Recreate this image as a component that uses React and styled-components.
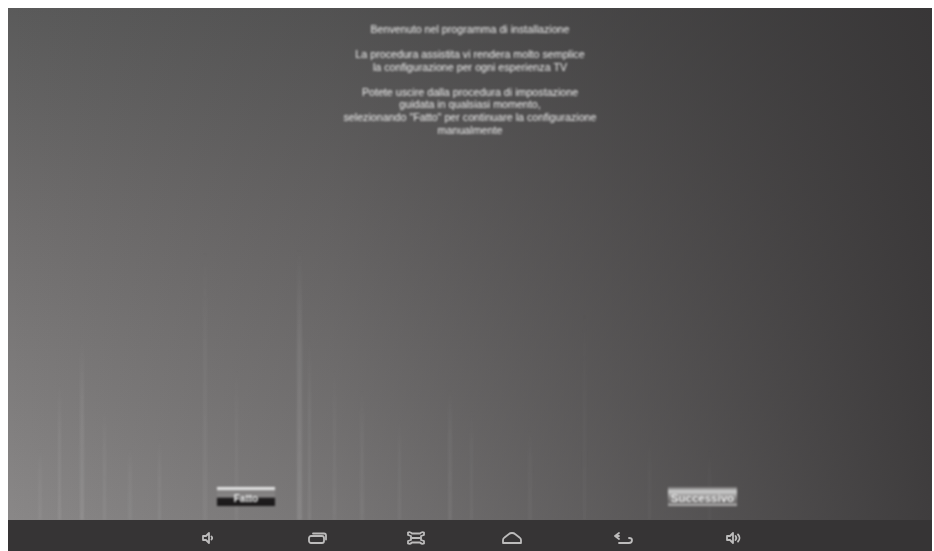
import React from "react";
import styled, { createGlobalStyle } from "styled-components";

const GlobalStyle = createGlobalStyle`
  html, body {
    margin: 0;
    padding: 0;
    background: #fff;
  }
`;

const Screen = styled.div`
  position: relative;
  display: flex;
  flex-direction: column;
  width: 924px;
  height: 543px;
  margin: 8px 0 0 8px;
  overflow: hidden;
  font-family: "Liberation Sans", Arial, sans-serif;
  background:
    linear-gradient(90deg, rgba(50, 48, 49, 0) 0%, rgba(50, 48, 49, 0.2) 35%, rgba(50, 48, 49, 0.55) 70%, rgba(50, 48, 49, 0.85) 100%),
    linear-gradient(180deg, #5a5a5a 0%, #706e6e 40%, #8c8a8a 100%);
`;

const Streaks = styled.svg`
  position: absolute;
  left: 0;
  top: 0;
  width: 924px;
  height: 512px;
  filter: blur(1.2px);
`;

const Body = styled.main`
  position: relative;
  flex: 1;
  display: flex;
  flex-direction: column;
  justify-content: space-between;
`;

const Message = styled.div`
  width: 340px;
  margin: 15px 0 0 292px;
  color: #f2f2f2;
  font-size: 10.7px;
  line-height: 12.7px;
  text-align: center;
  filter: blur(0.8px);
`;

const Paragraph = styled.p`
  margin: 0 0 12.3px;
`;

const Actions = styled.div`
  display: flex;
  justify-content: space-between;
  padding: 0 195px 14px 209px;
`;

const Button = styled.div`
  display: flex;
  align-items: center;
  justify-content: center;
  width: ${(p) => p.$width}px;
  height: 19px;
  padding-top: 3px;
  box-sizing: border-box;
  color: #fff;
  font-size: ${(p) => (p.$light ? 11.5 : 10)}px;
  font-weight: 700;
  white-space: nowrap;
  filter: blur(0.8px);
  background: ${(p) =>
    p.$light
      ? "linear-gradient(180deg, #6f6d6d 0%, #cfcfcf 22%, #8f8d8d 55%, #6c6a6a 80%, #bdbdbd 100%)"
      : "linear-gradient(180deg, #e6e6e6 0, #e6e6e6 12%, #7e7c7c 20%, #8a8888 52%, #1f1d1e 60%, #1b191a 100%)"};
  text-shadow: 0 0 1px #222;
`;

const Nav = styled.nav`
  position: relative;
  display: flex;
  align-items: center;
  height: 31px;
  padding-left: 187px;
  background: #363435;
`;

const IconSlot = styled.svg`
  width: 24px;
  height: 18px;
  margin-left: ${(p) => p.$gap || 0}px;
  margin-top: 5px;
  flex-shrink: 0;
  fill: none;
  stroke: #bdbcbc;
  stroke-width: 1.8;
  stroke-linejoin: round;
  stroke-linecap: round;
  filter: blur(0.7px);
`;

// x, top of the streak, width, strength
const streakData = [
  [30, 440, 4, 0.05],
  [50, 375, 3, 0.08],
  [72, 330, 4, 0.09],
  [95, 400, 3, 0.06],
  [120, 440, 4, 0.05],
  [150, 430, 3, 0.06],
  [195, 240, 4, 0.05],
  [227, 360, 3, 0.05],
  [289, 240, 5, 0.11],
  [300, 330, 3, 0.07],
  [325, 360, 3, 0.05],
  [352, 380, 4, 0.05],
  [390, 410, 3, 0.05],
  [440, 380, 4, 0.06],
  [462, 400, 3, 0.04],
  [520, 420, 4, 0.035],
  [575, 300, 3, 0.03],
  [640, 430, 3, 0.03],
  [700, 440, 3, 0.025],
];

export default function App() {
  return (
    <>
      <GlobalStyle />
      <Screen>
        <Streaks viewBox="0 0 924 512" aria-hidden="true">
          <defs>
            <linearGradient id="streak" x1="0" y1="0" x2="0" y2="1">
              <stop offset="0" stopColor="#fff" stopOpacity="0" />
              <stop offset="0.35" stopColor="#fff" stopOpacity="0.7" />
              <stop offset="1" stopColor="#fff" stopOpacity="1" />
            </linearGradient>
          </defs>
          {streakData.map(([x, top, w, o]) => (
            <rect key={x} x={x} y={top} width={w} height={512 - top} fill="url(#streak)" opacity={o} />
          ))}
        </Streaks>
        <Body>
          <Message>
            <Paragraph>Benvenuto nel programma di installazione</Paragraph>
            <Paragraph>
              La procedura assistita vi rendera molto semplice
              <br />
              la configurazione per ogni esperienza TV
            </Paragraph>
            <Paragraph>
              Potete uscire dalla procedura di impostazione
              <br />
              guidata in qualsiasi momento,
              <br />
              selezionando "Fatto" per continuare la configurazione
              <br />
              manualmente
            </Paragraph>
          </Message>
          <Actions>
            <Button $width={58}>Fatto</Button>
            <Button $width={69} $light>
              Successivo
            </Button>
          </Actions>
        </Body>
        <Nav>
          <IconSlot viewBox="0 0 24 18">
            <path d="M8 7h3l3-3v10l-3-3H8z" />
            <path d="M16.5 7.5c.8 1 .8 2 0 3" />
          </IconSlot>
          <IconSlot viewBox="0 0 24 18" $gap={87}>
            <path d="M7 4.5h11q2 0 2 2v4" />
            <rect x="3" y="7" width="15" height="7" rx="2" />
          </IconSlot>
          <IconSlot viewBox="0 0 24 18" $gap={74}>
            <path d="M4 3.500q2-1 4 1h8q2-2 4-1v2.500l-3 1v4l3 1v2.500q-2 1-4-1H8q-2 2-4 1v-2.500l3-1v-4l-3-1z" />
            <path d="M8 9h8" />
          </IconSlot>
          <IconSlot viewBox="0 0 24 18" $gap={72}>
            <path d="M3 14v-3q0-1.500 1.500-2.500L9 5q1-1 3-1t3 1l4.500 3.500Q21 9.500 21 11v3z" />
          </IconSlot>
          <IconSlot viewBox="0 0 24 18" $gap={87}>
            <path d="M8 7h-3M8 14h10q3 0 3-3 0-2-3-2" />
            <path d="M8 4L4 7l4 3" />
          </IconSlot>
          <IconSlot viewBox="0 0 24 18" $gap={86}>
            <path d="M6 7h3l3-3v10l-3-3H6z" />
            <path d="M14.500 7c1 1.200 1 2.800 0 4M17 5.500c2 2 2 5 0 7" />
          </IconSlot>
        </Nav>
      </Screen>
    </>
  );
}
